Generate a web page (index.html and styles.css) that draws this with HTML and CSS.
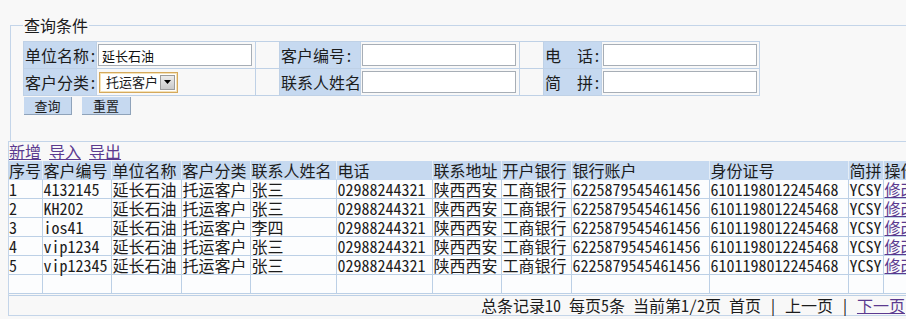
FILE: index.html
```html
<!DOCTYPE html>
<html lang="zh-CN">
<head>
<meta charset="utf-8">
<title>客户管理</title>
<link rel="stylesheet" href="styles.css">
</head>
<body>
<div class="page">
  <fieldset class="query">
    <legend>查询条件</legend>
    <table class="form">
      <colgroup>
        <col class="c-l1"><col class="c-in"><col class="c-gap"><col class="c-l2"><col class="c-in"><col class="c-gap"><col class="c-l3"><col class="c-in3">
      </colgroup>
      <tr>
        <td class="lbl">单位名称:</td>
        <td class="fld"><input class="txt" type="text" value="延长石油"></td>
        <td class="gap"></td>
        <td class="lbl">客户编号:</td>
        <td class="fld"><input class="txt" type="text"></td>
        <td class="gap"></td>
        <td class="lbl">电　话:</td>
        <td class="fld"><input class="txt" type="text"></td>
      </tr>
      <tr>
        <td class="lbl">客户分类:</td>
        <td class="fld">
          <div class="select"><span class="sel-text">托运客户</span><span class="sel-btn"><svg width="8" height="5" viewBox="0 0 8 5"><path d="M0 0h7L3.5 4z" fill="#000"/></svg></span></div>
        </td>
        <td class="gap"></td>
        <td class="lbl">联系人姓名</td>
        <td class="fld"><input class="txt" type="text"></td>
        <td class="gap"></td>
        <td class="lbl">简　拼:</td>
        <td class="fld"><input class="txt" type="text"></td>
      </tr>
    </table>
    <div class="btns"><button class="btn" type="button">查询</button><button class="btn btn2" type="button">重置</button></div>
  </fieldset>

  <div class="list">
    <div class="actions"><a href="#">新增</a> <a href="#">导入</a> <a href="#">导出</a></div>
    <table class="grid">
      <colgroup>
        <col class="g1"><col class="g2"><col class="g3"><col class="g4"><col class="g5"><col class="g6"><col class="g7"><col class="g8"><col class="g9"><col class="g10"><col class="g11"><col class="g12">
      </colgroup>
      <thead>
        <tr><th>序号</th><th>客户编号</th><th>单位名称</th><th>客户分类</th><th>联系人姓名</th><th>电话</th><th>联系地址</th><th>开户银行</th><th>银行账户</th><th>身份证号</th><th>简拼</th><th>操作</th></tr>
      </thead>
      <tbody>
        <tr><td>1</td><td>4132145</td><td>延长石油</td><td>托运客户</td><td>张三</td><td>02988244321</td><td>陕西西安</td><td>工商银行</td><td>6225879545461456</td><td>6101198012245468</td><td>YCSY</td><td><a href="#">修改</a> <a href="#">删除</a></td></tr>
        <tr><td>2</td><td>KH202</td><td>延长石油</td><td>托运客户</td><td>张三</td><td>02988244321</td><td>陕西西安</td><td>工商银行</td><td>6225879545461456</td><td>6101198012245468</td><td>YCSY</td><td><a href="#">修改</a> <a href="#">删除</a></td></tr>
        <tr><td>3</td><td>ios41</td><td>延长石油</td><td>托运客户</td><td>李四</td><td>02988244321</td><td>陕西西安</td><td>工商银行</td><td>6225879545461456</td><td>6101198012245468</td><td>YCSY</td><td><a href="#">修改</a> <a href="#">删除</a></td></tr>
        <tr><td>4</td><td>vip1234</td><td>延长石油</td><td>托运客户</td><td>张三</td><td>02988244321</td><td>陕西西安</td><td>工商银行</td><td>6225879545461456</td><td>6101198012245468</td><td>YCSY</td><td><a href="#">修改</a> <a href="#">删除</a></td></tr>
        <tr><td>5</td><td>vip12345</td><td>延长石油</td><td>托运客户</td><td>张三</td><td>02988244321</td><td>陕西西安</td><td>工商银行</td><td>6225879545461456</td><td>6101198012245468</td><td>YCSY</td><td><a href="#">修改</a> <a href="#">删除</a></td></tr>
        <tr class="empty"><td></td><td></td><td></td><td></td><td></td><td></td><td></td><td></td><td></td><td></td><td></td><td></td></tr>
      </tbody>
    </table>
    <div class="pager">总条记录10 每页5条 当前第1/2页 首页 | 上一页 | <a href="#">下一页</a> | <a href="#">尾页</a></div>
  </div>
</div>
</body>
</html>
```

FILE: styles.css
```css
html {
  overflow: hidden;
}

body {
  margin: 0;
  background: #f8f8f8;
  color: #1c1c1c;
  font-family: "Noto Sans Mono CJK SC", "Noto Sans CJK SC", monospace;
  font-size: 16px;
  line-height: 18px;
}

.page {
  width: 956px;
  padding: 16px 0 0 8px;
}

/* ---------- query fieldset ---------- */
.query {
  box-sizing: border-box;
  width: 952px;
  margin: 0 0 0 2px;
  padding: 7px 12px 26px 12px;
  border: 1px solid #c4d5e9;
  min-width: 0;
}

.query legend {
  padding: 0 1px;
  font-size: 16px;
  line-height: 18px;
}

.form {
  border-collapse: collapse;
  table-layout: fixed;
  width: 736px;
}

.form .c-l1 { width: 73px; }
.form .c-in { width: 159px; }
.form .c-gap { width: 24px; }
.form .c-l2 { width: 81px; }
.form .c-l3 { width: 58px; }
.form .c-in3 { width: 158px; }

.form td {
  border: 1px solid #bfd1e6;
  padding: 0 0 0 1px;
  height: 26px;
  vertical-align: middle;
  white-space: nowrap;
}

.form .lbl {
  background: #c6d9f0;
}

.form .fld {
  padding-left: 1px;
}

.txt {
  box-sizing: border-box;
  width: 154px;
  height: 22px;
  margin: 0;
  padding: 0 3px;
  border: 1px solid #a7aeb6;
  background: #fff;
  font-family: inherit;
  font-size: 13px;
  color: #111;
  display: block;
}

.select {
  box-sizing: border-box;
  width: 79px;
  height: 21px;
  margin-left: 1px;
  border: 1px solid #d5a95c;
  box-shadow: inset 0 0 0 1px #f4e2b8;
  background: #fff;
  display: flex;
  align-items: center;
  justify-content: space-between;
  padding: 0 2px 0 6px;
  font-size: 13px;
}

.sel-btn {
  box-sizing: border-box;
  width: 15px;
  height: 15px;
  border: 1px solid #9c9c9c;
  background: linear-gradient(#ececec, #c9c9c9);
  display: flex;
  align-items: center;
  justify-content: center;
}

.btns {
  display: flex;
  gap: 10px;
  padding-left: 1px;
  margin-top: 1px;
}

.btn {
  box-sizing: border-box;
  width: 48px;
  height: 18px;
  margin: 0;
  padding: 0;
  border: none;
  border-right: 1px solid #8fa3ba;
  border-bottom: 1px solid #8fa3ba;
  background: #c6d9f0;
  font-family: inherit;
  font-size: 13px;
  line-height: 17px;
  color: #1c1c1c;
}

.btn2 {
  width: 49px;
}

/* ---------- list ---------- */
.list {
  width: 956px;
  box-sizing: border-box;
  margin-top: -1px;
  border: 1px solid #c4d5e9;
}

a {
  color: #5b3a8f;
  text-decoration: underline;
}

.actions {
  height: 19px;
  line-height: 19px;
  white-space: nowrap;
}

.grid {
  width: 100%;
  border-collapse: collapse;
  table-layout: fixed;
}

.grid .g1 { width: 33px; }
.grid .g2 { width: 69px; }
.grid .g3 { width: 70px; }
.grid .g4 { width: 69px; }
.grid .g5 { width: 86px; }
.grid .g6 { width: 96px; }
.grid .g7 { width: 69px; }
.grid .g8 { width: 70px; }
.grid .g9 { width: 138px; }
.grid .g10 { width: 139px; }
.grid .g11 { width: 35px; }
.grid .g12 { width: auto; }

.grid th,
.grid td {
  border: 1px solid #bcd0e6;
  padding: 0 0 0 1px;
  height: 18px;
  line-height: 18px;
  text-align: left;
  font-weight: normal;
  white-space: nowrap;
}

.grid th {
  background: #c6d9f0;
  border-top: none;
  border-color: #c6d9f0 #e4edf7;
}

.grid td {
  background: #fcfdfe;
}

.grid tr > :first-child {
  border-left: none;
  padding-left: 0;
}

.grid tr > :last-child {
  border-right: none;
}

.pager {
  margin-top: 1px;
  border-top: 1px solid #bcd0e6;
  height: 19px;
  line-height: 19px;
  text-align: right;
  white-space: nowrap;
  padding-right: 2px;
}
```
